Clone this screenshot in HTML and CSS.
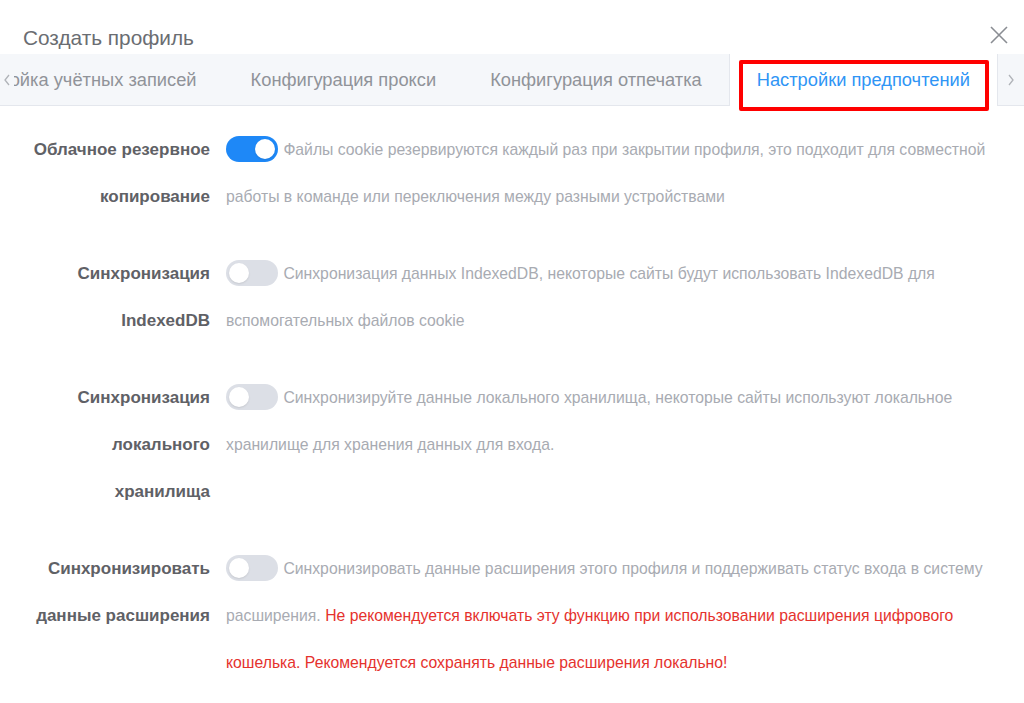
FILE: index.html
```html
<!DOCTYPE html>
<html>

<head>
    <meta charset="utf-8">
    <link rel="stylesheet" href="styles.css">
</head>

<body>

    <div class="dialog">

        <header class="dialog-header">
            <span class="dialog-title">Создать профиль</span>
            <button class="dialog-close" aria-label="close">
                <svg width="18" height="18" viewBox="0 0 18 18">
                    <path d="M1 1 L17 17 M17 1 L1 17" stroke="#8a8d93" stroke-width="1.6" fill="none" />
                </svg>
            </button>
        </header>

        <nav class="tabs">
            <span class="tabs-arrow prev">
                <svg width="8" height="12" viewBox="0 0 8 12">
                    <path d="M6 1 L2 6 L6 11" stroke="#b0b3b8" stroke-width="1.3" fill="none" />
                </svg>
            </span>
            <div class="tabs-scroll">
                <div class="tabs-track">
                    <a class="tab">Настройка учётных записей</a>
                    <a class="tab">Конфигурация прокси</a>
                    <a class="tab">Конфигурация отпечатка</a>
                    <a class="tab active">Настройки предпочтений</a>
                </div>
            </div>
            <span class="tabs-arrow next">
                <svg width="8" height="12" viewBox="0 0 8 12">
                    <path d="M2 1 L6 6 L2 11" stroke="#b0b3b8" stroke-width="1.3" fill="none" />
                </svg>
            </span>
        </nav>

        <form class="prefs">
            <div class="form-row">
                <label class="form-label">Облачное резервное копирование</label>
                <div class="form-content">
                    <span class="switch on"><span class="knob"></span></span>
                    Файлы cookie резервируются каждый раз при закрытии профиля, это подходит для совместной работы в команде или переключения между разными устройствами
                </div>
            </div>

            <div class="form-row">
                <label class="form-label">Синхронизация IndexedDB</label>
                <div class="form-content">
                    <span class="switch"><span class="knob"></span></span>
                    Синхронизация данных IndexedDB, некоторые сайты будут использовать IndexedDB для вспомогательных файлов cookie
                </div>
            </div>

            <div class="form-row">
                <label class="form-label">Синхронизация локального хранилища</label>
                <div class="form-content">
                    <span class="switch"><span class="knob"></span></span>
                    Синхронизируйте данные локального хранилища, некоторые сайты используют локальное хранилище для хранения данных для входа.
                </div>
            </div>

            <div class="form-row">
                <label class="form-label">Синхронизировать данные расширения</label>
                <div class="form-content">
                    <span class="switch"><span class="knob"></span></span>
                    Синхронизировать данные расширения этого профиля и поддерживать статус входа в систему расширения. <span class="warn">Не рекомендуется включать эту функцию при использовании расширения цифрового кошелька. Рекомендуется сохранять данные расширения локально!</span>
                </div>
            </div>
        </form>

    </div>

</body>

</html>
```

FILE: styles.css
```css
body {
    margin: 0;
    padding: 0;
    background-color: white;
    font-family: "Liberation Sans", Arial, sans-serif;
    overflow: hidden;
}

.dialog {
    width: 1024px;
    height: 703px;
}

.dialog-header {
    display: flex;
    align-items: flex-end;
    justify-content: space-between;
    height: 54px;
    padding: 0 16px 4px 23px;
    box-sizing: border-box;
}

.dialog-title {
    font-size: 20.8px;
    color: #6a6d72;
}

.dialog-close {
    border: none;
    background: none;
    padding: 0;
    margin-bottom: 3px;
    cursor: pointer;
}

/* tab strip */
.tabs {
    display: flex;
    height: 52px;
    background-color: #f5f7fa;
    border-bottom: 1px solid #e4e7ed;
    box-sizing: border-box;
}

.tabs-arrow {
    display: flex;
    align-items: center;
    justify-content: center;
    width: 14px;
    flex-shrink: 0;
}

.tabs-arrow.next {
    width: 26px;
    border-left: 1px solid #e4e7ed;
    margin-bottom: -1px;
}

.tabs-scroll {
    flex: 1;
    min-width: 0;
    overflow-x: clip;
    overflow-y: visible;
    display: flex;
    justify-content: flex-end;
}

.tabs-track {
    display: flex;
    flex-shrink: 0;
}

.tab {
    display: flex;
    align-items: center;
    padding: 0 27px;
    font-size: 18.3px;
    color: #909399;
    white-space: nowrap;
}

.tab.active {
    position: relative;
    color: #2f95f5;
    background-color: white;
    border-left: 1px solid #e4e7ed;
    padding: 0 27px 0 27px;
    margin-bottom: -1px;
}

/* red highlight round the active tab */
.tab.active::after {
    content: "";
    position: absolute;
    left: 9px;
    right: 8px;
    top: 6px;
    bottom: -5px;
    border: 4px solid #ff0000;
    border-radius: 2px;
}

/* preferences form */
.prefs {
    padding: 20px 30px 0 0;
}

.form-row {
    display: flex;
    margin-bottom: 30px;
}

.form-label {
    width: 226px;
    padding: 0 16px 0 30px;
    box-sizing: border-box;
    flex-shrink: 0;
    text-align: right;
    font-size: 17px;
    font-weight: bold;
    color: #5f6166;
    line-height: 47px;
}

.form-content {
    flex: 1;
    font-size: 15.75px;
    color: #a8abb2;
    line-height: 47px;
}

.warn {
    color: #e5322d;
}

.switch {
    display: inline-block;
    position: relative;
    width: 52px;
    height: 26px;
    border-radius: 13px;
    background-color: #dcdfe6;
    vertical-align: middle;
    margin: -4px 1px 0 0;
}

.switch .knob {
    position: absolute;
    top: 3px;
    left: 3px;
    width: 20px;
    height: 20px;
    border-radius: 50%;
    background-color: white;
    box-shadow: 0 1px 2px rgba(0, 0, 0, 0.1);
}

.switch.on {
    background-color: #1e88f7;
}

.switch.on .knob {
    left: 29px;
}
```
